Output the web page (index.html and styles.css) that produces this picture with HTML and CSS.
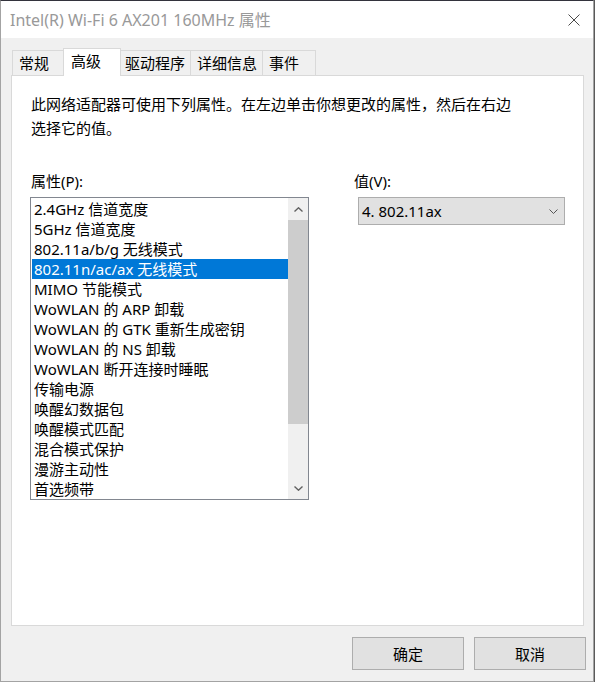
FILE: index.html
```html
<!DOCTYPE html>
<html lang="zh-CN">
<head>
    <meta charset="UTF-8">
    <title>Intel(R) Wi-Fi 6 AX201 160MHz 属性</title>
    <link rel="stylesheet" href="styles.css">
</head>
<body>
    <div class="window">
        <!-- Title bar -->
        <div class="titlebar">
            <span class="title">Intel(R) Wi-Fi 6 AX201 160MHz 属性</span>
            <svg class="close" width="12" height="12" viewBox="0 0 12 12">
                <path d="M0.5 0.5 L11.5 11.5 M11.5 0.5 L0.5 11.5" stroke="#4a4a4a" stroke-width="1" fill="none"/>
            </svg>
        </div>

        <div class="content">
            <div class="tabs">
                <div class="tab">常规</div>
                <div class="tab active">高级</div>
                <div class="tab">驱动程序</div>
                <div class="tab">详细信息</div>
                <div class="tab">事件</div>
            </div>

            <div class="panel">
                <p class="intro">此网络适配器可使用下列属性。在左边单击你想更改的属性，然后在右边选择它的值。</p>

                <div class="fields">
                    <div class="field field-props">
                        <label>属性(P):</label>
                        <div class="listbox">
                            <ul class="items">
                                <li>2.4GHz 信道宽度</li>
                                <li>5GHz 信道宽度</li>
                                <li>802.11a/b/g 无线模式</li>
                                <li class="selected">802.11n/ac/ax 无线模式</li>
                                <li>MIMO 节能模式</li>
                                <li>WoWLAN 的 ARP 卸载</li>
                                <li>WoWLAN 的 GTK 重新生成密钥</li>
                                <li>WoWLAN 的 NS 卸载</li>
                                <li>WoWLAN 断开连接时睡眠</li>
                                <li>传输电源</li>
                                <li>唤醒幻数据包</li>
                                <li>唤醒模式匹配</li>
                                <li>混合模式保护</li>
                                <li>漫游主动性</li>
                                <li>首选频带</li>
                            </ul>
                            <div class="scrollbar">
                                <div class="scroll-btn">
                                    <svg width="9" height="5" viewBox="0 0 9 5"><path d="M0.5 4.5 L4.5 0.8 L8.5 4.5" stroke="#606060" stroke-width="1.4" fill="none"/></svg>
                                </div>
                                <div class="scroll-thumb"></div>
                                <div class="scroll-track"></div>
                                <div class="scroll-btn">
                                    <svg width="9" height="5" viewBox="0 0 9 5"><path d="M0.5 0.5 L4.5 4.2 L8.5 0.5" stroke="#606060" stroke-width="1.4" fill="none"/></svg>
                                </div>
                            </div>
                        </div>
                    </div>

                    <div class="field field-value">
                        <label>值(V):</label>
                        <div class="combo">
                            <span>4. 802.11ax</span>
                            <svg width="9" height="5" viewBox="0 0 9 5"><path d="M0.5 0.5 L4.5 4.5 L8.5 0.5" stroke="#555" stroke-width="1" fill="none"/></svg>
                        </div>
                    </div>
                </div>
            </div>

            <div class="actions">
                <button>确定</button>
                <button>取消</button>
            </div>
        </div>
    </div>
</body>
</html>
```

FILE: styles.css
```css
/* Global Styles */
* {
    box-sizing: border-box;
}

html, body {
    margin: 0;
    padding: 0;
}

body {
    background-color: #5a5a5a;
    font-family: "Noto Sans", "Noto Sans CJK SC", sans-serif;
    font-size: 15px;
    color: #000;
}

/* Window frame */
.window {
    width: 594px;
    height: 682px;
    display: flex;
    flex-direction: column;
    background-color: #f0f0f0;
    border: 1px solid #a3a3a3;
    border-top-color: #33333d;
}

.titlebar {
    height: 37px;
    display: flex;
    align-items: center;
    justify-content: space-between;
    padding: 0 13px 0 9px;
    background-color: #fff;
}

.title {
    color: #999;
    font-size: 16px;
    line-height: 20px;
}

.content {
    flex: 1;
    padding: 10px 0 0 10px;
}

/* Tabs */
.tabs {
    display: flex;
    align-items: flex-end;
    height: 27px;
    margin-left: 1px;
}

.tab {
    height: 25px;
    min-width: 54px;
    padding: 0 5px 0 6px;
    margin-left: -1px;
    line-height: 24px;
    background-color: #f0f0f0;
    border: 1px solid #d9d9d9;
    border-bottom: none;
    white-space: nowrap;
}

.tab:first-child {
    margin-left: 0;
}

.tab.active {
    position: relative;
    z-index: 1;
    height: 28px;
    min-width: 58px;
    margin: 0 -2px -1px -3px;
    padding-left: 7px;
    background-color: #fff;
}

/* Panel */
.panel {
    width: 573px;
    height: 551px;
    padding: 16px 18px 0 18px;
    background-color: #fff;
    border: 1px solid #d9d9d9;
}

.intro {
    width: 490px;
    margin: 0 0 0 1px;
    line-height: 24px;
}

.fields {
    display: flex;
    margin-top: 31px;
}

.field label {
    display: block;
    margin: 0 0 6px 1px;
    line-height: 20px;
}

.field-props {
    width: 279px;
}

.field-value {
    margin-left: 45px;
}

.field-value label {
    margin-left: 0;
}

/* List box */
.listbox {
    display: flex;
    height: 303px;
    background-color: #fff;
    border: 1px solid #828790;
}

.items {
    flex: 1;
    margin: 0;
    padding: 1px 0 0 1px;
    list-style: none;
    overflow: hidden;
}

.items li {
    height: 20px;
    padding-left: 2px;
    line-height: 20px;
    white-space: nowrap;
}

.items li.selected {
    background-color: #0078d7;
    color: #fff;
}

.scrollbar {
    width: 20px;
    display: flex;
    flex-direction: column;
    background-color: #f0f0f0;
}

.scroll-btn {
    height: 22px;
    display: flex;
    align-items: center;
    justify-content: center;
}

.scroll-thumb {
    height: 204px;
    background-color: #cdcdcd;
}

.scroll-track {
    flex: 1;
}

/* Combo box */
.combo {
    width: 207px;
    height: 28px;
    margin-left: 4px;
    display: flex;
    align-items: center;
    justify-content: space-between;
    padding: 0 6px 0 3px;
    background-color: #e1e1e1;
    border: 1px solid #adadad;
}

/* Dialog buttons */
.actions {
    display: flex;
    justify-content: flex-end;
    gap: 10px;
    padding: 11px 7px 0 0;
}

.actions button {
    width: 112px;
    height: 33px;
    padding: 0;
    font: inherit;
    color: #000;
    background-color: #e1e1e1;
    border: 1px solid #adadad;
}
```
